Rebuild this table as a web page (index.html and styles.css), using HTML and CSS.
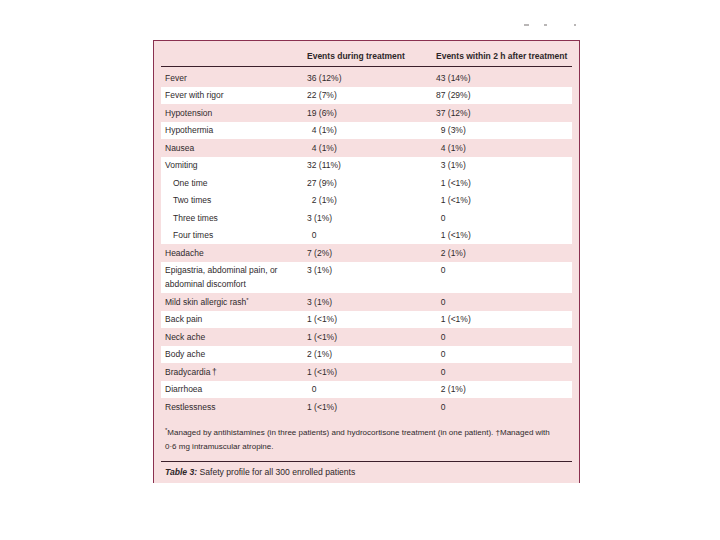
FILE: index.html
```html
<!DOCTYPE html>
<html>
<head>
<meta charset="utf-8">
<link rel="stylesheet" href="styles.css">
</head>
<body>
<div class="pagehead">
  <span class="mark m1"></span>
  <span class="mark m2"></span>
  <span class="mark m3"></span>
</div>
<div class="panel">
  <div class="thead">
    <div></div>
    <div>Events during treatment</div>
    <div>Events within 2 h after treatment</div>
  </div>
  <div class="tbody">
    <div class="row"><div>Fever</div><div>36 (12%)</div><div>43 (14%)</div></div>
    <div class="row alt"><div>Fever with rigor</div><div>22 (7%)</div><div>87 (29%)</div></div>
    <div class="row"><div>Hypotension</div><div>19 (6%)</div><div>37 (12%)</div></div>
    <div class="row alt"><div>Hypothermia</div><div>&#8199;4 (1%)</div><div>&#8199;9 (3%)</div></div>
    <div class="row"><div>Nausea</div><div>&#8199;4 (1%)</div><div>&#8199;4 (1%)</div></div>
    <div class="group alt">
      <div class="row"><div>Vomiting</div><div>32 (11%)</div><div>&#8199;3 (1%)</div></div>
      <div class="row sub"><div>One time</div><div>27 (9%)</div><div>&#8199;1 (&lt;1%)</div></div>
      <div class="row sub"><div>Two times</div><div>&#8199;2 (1%)</div><div>&#8199;1 (&lt;1%)</div></div>
      <div class="row sub"><div>Three times</div><div>3 (1%)</div><div>&#8199;0</div></div>
      <div class="row sub"><div>Four times</div><div>&#8199;0</div><div>&#8199;1 (&lt;1%)</div></div>
    </div>
    <div class="row"><div>Headache</div><div>7 (2%)</div><div>&#8199;2 (1%)</div></div>
    <div class="row alt"><div>Epigastria, abdominal pain, or<br>abdominal discomfort</div><div>3 (1%)</div><div>&#8199;0</div></div>
    <div class="row"><div>Mild skin allergic rash<sup>*</sup></div><div>3 (1%)</div><div>&#8199;0</div></div>
    <div class="row alt"><div>Back pain</div><div>1 (&lt;1%)</div><div>&#8199;1 (&lt;1%)</div></div>
    <div class="row"><div>Neck ache</div><div>1 (&lt;1%)</div><div>&#8199;0</div></div>
    <div class="row alt"><div>Body ache</div><div>2 (1%)</div><div>&#8199;0</div></div>
    <div class="row"><div>Bradycardia&#8201;&#8224;</div><div>1 (&lt;1%)</div><div>&#8199;0</div></div>
    <div class="row alt"><div>Diarrhoea</div><div>&#8199;0</div><div>&#8199;2 (1%)</div></div>
    <div class="row"><div>Restlessness</div><div>1 (&lt;1%)</div><div>&#8199;0</div></div>
  </div>
  <p class="foot"><sup>*</sup>Managed by antihistamines (in three patients) and hydrocortisone treatment (in one patient). &#8224;Managed with<br>0·6 mg intramuscular atropine.</p>
  <p class="caption"><span class="tlabel">Table 3:</span> Safety profile for all 300 enrolled patients</p>
</div>
</body>
</html>
```

FILE: styles.css
```css
html, body {
  margin: 0;
  padding: 0;
  background: #ffffff;
}

body {
  font-family: "Liberation Sans", Arial, sans-serif;
  color: #2f2a2c;
  width: 720px;
  height: 540px;
  overflow: hidden;
}

.pagehead {
  height: 40px;
  box-sizing: border-box;
  padding-top: 24px;
  padding-left: 524px;
  display: flex;
  align-items: flex-start;
}

.mark {
  display: block;
  height: 2px;
  background: #b9b6b6;
}

.m1 { width: 5px; }
.m2 { width: 3px; margin-left: 15px; }
.m3 { width: 2px; margin-left: 27px; }

.panel {
  margin-left: 153px;
  width: 427px;
  box-sizing: border-box;
  height: 443px;
  background: #f7dfe0;
  border: 1px solid #8a3150;
  border-bottom: none;
  padding: 0 7px;
}

.thead,
.row {
  display: grid;
  grid-template-columns: 142px 129px 1fr;
  padding-left: 4px;
}

.thead {
  font-size: 8.5px;
  font-weight: bold;
  color: #2e2729;
  line-height: 14px;
  padding-top: 8px;
  padding-bottom: 3px;
  border-bottom: 1px solid #3c1f2b;
}

.tbody {
  padding-top: 2px;
}

.row {
  font-size: 8.5px;
  line-height: 14px;
  padding-top: 1.75px;
  padding-bottom: 1.75px;
}

.alt {
  background: #ffffff;
}

.sub > div:first-child {
  padding-left: 8px;
}

sup {
  font-size: 6px;
  line-height: 0;
  vertical-align: 3px;
}

.foot {
  margin: 10px 0 0 0;
  padding-left: 4px;
  font-size: 8px;
  line-height: 14px;
  padding-bottom: 7px;
  border-bottom: 1px solid #3c1f2b;
}

.caption {
  margin: 0;
  padding: 3px 0 0 4px;
  font-size: 8.6px;
  line-height: 14px;
  color: #2e2729;
}

.tlabel {
  font-weight: bold;
  font-style: italic;
}
```
